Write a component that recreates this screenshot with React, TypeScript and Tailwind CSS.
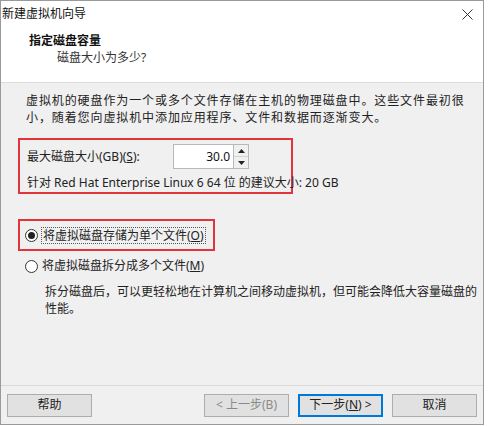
import React from 'react';

const FONT = { fontFamily: '"Noto Sans", "Noto Sans CJK SC", sans-serif' };

const Btn: React.FC<{ label: React.ReactNode; primary?: boolean; disabled?: boolean }> = ({ label, primary, disabled }) => (
  <button
    className={`w-[85px] h-[23px] bg-[#e1e1e1] text-[12px] flex items-center justify-center border ${
      primary ? 'border-[#0078d7] border-2' : 'border-[#adadad]'
    } ${disabled ? 'text-[#8a8a8a]' : 'text-[#222]'}`}
  >
    {label}
  </button>
);

const Radio: React.FC<{ checked?: boolean }> = ({ checked }) => (
  <span className="w-[13px] h-[13px] rounded-full border border-[#333] bg-white flex items-center justify-center shrink-0">
    {checked && <span className="w-[7px] h-[7px] rounded-full bg-[#222]" />}
  </span>
);

export default function App() {
  return (
    <div className="w-[488px] h-[426px] bg-white overflow-hidden" style={FONT}>
      <div className="w-[484px] h-[425px] border border-[#9a9a9a] flex flex-col">
        {/* header */}
        <div className="bg-white border-b border-[#dcdcdc] h-[82px] flex flex-col">
          <div className="h-[26px] flex items-center justify-between pl-[1px] pr-[10px]">
            <span className="text-[12px] text-[#111]">新建虚拟机向导</span>
            <svg width="11" height="11" viewBox="0 0 11 11" className="text-[#333]">
              <path d="M0.5 0.5 L10.5 10.5 M10.5 0.5 L0.5 10.5" stroke="currentColor" strokeWidth="1" />
            </svg>
          </div>
          <div className="pl-[28px] pt-[6px] flex flex-col">
            <span className="text-[12px] font-bold text-[#111] leading-[16px]">指定磁盘容量</span>
            <span className="text-[12px] text-[#333] leading-[16px] pl-[28px] mt-[1px]">磁盘大小为多少?</span>
          </div>
        </div>

        {/* body */}
        <div className="flex-1 bg-[#f0f0f0] flex flex-col pl-[17px] pr-[8px] pt-[9px]">
          <p className="text-[12px] leading-[17px] text-[#222] pl-[8px] tracking-[0.9px] whitespace-nowrap">
            虚拟机的硬盘作为一个或多个文件存储在主机的物理磁盘中。这些文件最初很
            <br />
            小，随着您向虚拟机中添加应用程序、文件和数据而逐渐变大。
          </p>

          <div className="mt-[12px] w-[275px] h-[56px] border-2 border-[#e0353b] flex flex-col pl-[7px] pt-[4px]">
            <div className="flex items-center h-[26px]">
              <span className="text-[12px] text-[#222] w-[146px]">
                最大磁盘大小(GB)(<span className="underline">S</span>):
              </span>
              <div className="flex items-center">
                <div className="w-[61px] h-[25px] bg-white border border-[#b9b9b9] flex items-center justify-end pr-[3px] text-[12px] text-[#111]">
                  30.0
                </div>
                <div className="flex flex-col w-[15px] h-[25px] border border-l-0 border-[#b9b9b9]">
                  <div className="flex-1 bg-[#f0f0f0] border-b border-[#d4d4d4] flex items-center justify-center">
                    <svg width="7" height="4" viewBox="0 0 7 4"><path d="M3.5 0 L7 4 L0 4 Z" fill="#222" /></svg>
                  </div>
                  <div className="flex-1 bg-[#f0f0f0] flex items-center justify-center">
                    <svg width="7" height="4" viewBox="0 0 7 4"><path d="M0 0 L7 0 L3.5 4 Z" fill="#222" /></svg>
                  </div>
                </div>
              </div>
            </div>
            <div className="text-[12px] text-[#222] mt-[5px] whitespace-nowrap">
              针对 Red Hat Enterprise Linux 6 64 位 的建议大小: 20 GB
            </div>
          </div>

          <div className="mt-[25px] w-[197px] h-[32px] border-2 border-[#e0353b] flex items-center pl-[5px]">
            <Radio checked />
            <span className="ml-[3px] text-[12px] text-[#222] border border-dotted border-[#555] px-[1px] leading-[15px]">
              将虚拟磁盘存储为单个文件(<span className="underline">O</span>)
            </span>
          </div>

          <div className="mt-[4px] flex items-center pl-[7px] h-[22px]">
            <Radio />
            <span className="ml-[4px] text-[12px] text-[#222]">
              将虚拟磁盘拆分成多个文件(<span className="underline">M</span>)
            </span>
          </div>

          <p className="mt-[6px] pl-[27px] text-[12px] leading-[17px] text-[#222] whitespace-nowrap">
            拆分磁盘后，可以更轻松地在计算机之间移动虚拟机，但可能会降低大容量磁盘的
            <br />
            性能。
          </p>
        </div>

        {/* footer */}
        <div className="h-[39px] bg-[#f0f0f0] border-t border-[#d9d9d9] flex items-center px-[6px] justify-between">
          <Btn label="帮助" />
          <div className="flex items-center gap-[9px]">
            <Btn label="< 上一步(B)" disabled />
            <Btn label={<>下一步(<span className="underline">N</span>) &gt;</>} primary />
            <Btn label="取消" />
          </div>
        </div>
      </div>
    </div>
  );
}
